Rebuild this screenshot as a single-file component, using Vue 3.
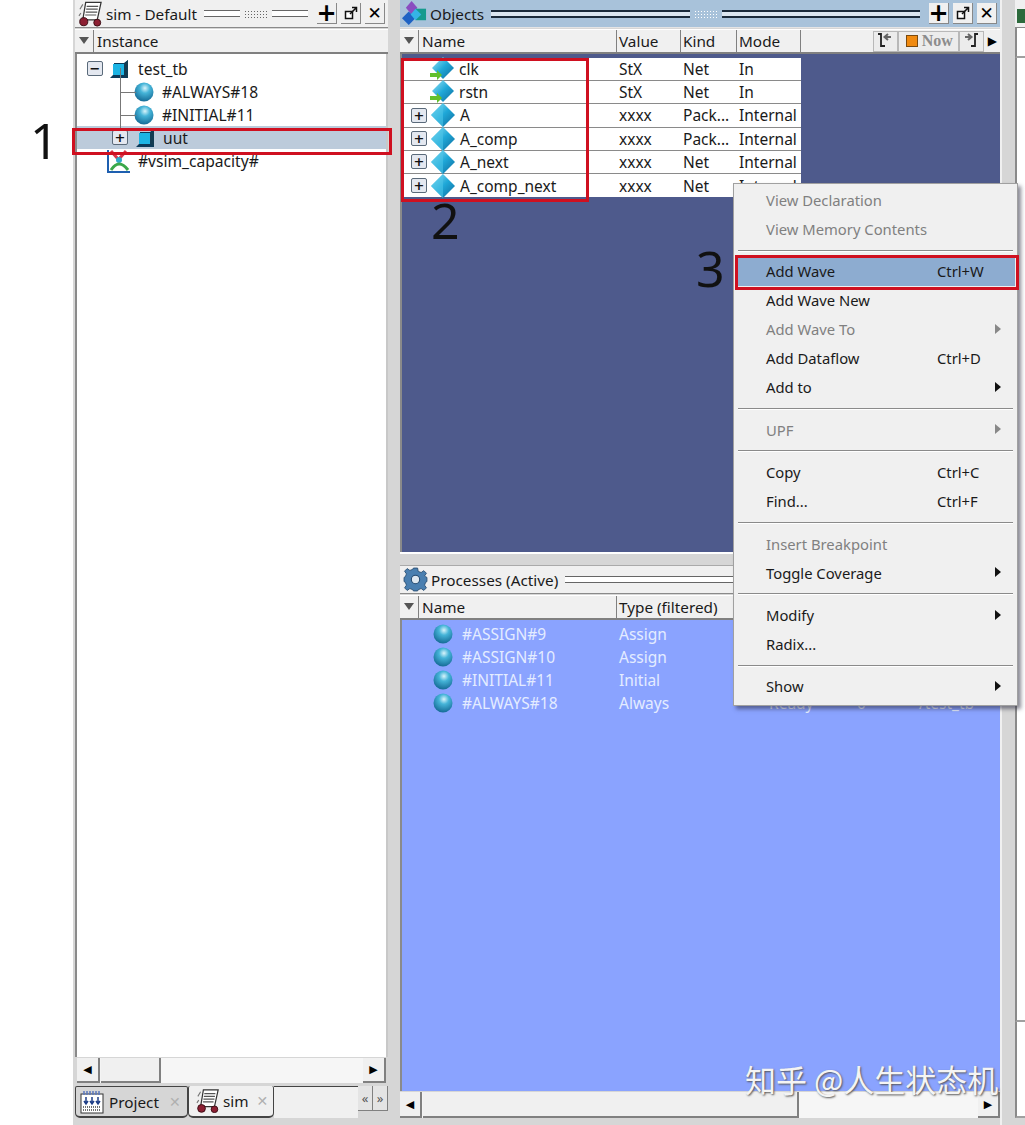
<script setup>
const tree = [
  { name: 'test_tb', icon: 'block', toggle: '−', level: 0 },
  { name: '#ALWAYS#18', icon: 'ball', level: 1, branch: true },
  { name: '#INITIAL#11', icon: 'ball', level: 1, branch: true },
  { name: 'uut', icon: 'block', toggle: '+', level: 1, selected: true, branch: true },
  { name: '#vsim_capacity#', icon: 'capacity', level: 2 }
]

const objects = [
  { name: 'clk', value: 'StX', kind: 'Net', mode: 'In', port: true },
  { name: 'rstn', value: 'StX', kind: 'Net', mode: 'In', port: true },
  { name: 'A', value: 'xxxx', kind: 'Pack...', mode: 'Internal' },
  { name: 'A_comp', value: 'xxxx', kind: 'Pack...', mode: 'Internal' },
  { name: 'A_next', value: 'xxxx', kind: 'Net', mode: 'Internal' },
  { name: 'A_comp_next', value: 'xxxx', kind: 'Net', mode: 'Internal' }
]

const processes = [
  { name: '#ASSIGN#9', type: 'Assign', state: 'Ready', order: '0', parent: '/test_tb' },
  { name: '#ASSIGN#10', type: 'Assign', state: 'Ready', order: '0', parent: '/test_tb' },
  { name: '#INITIAL#11', type: 'Initial', state: 'Ready', order: '0', parent: '/test_tb' },
  { name: '#ALWAYS#18', type: 'Always', state: 'Ready', order: '0', parent: '/test_tb' }
]

const menu = [
  { label: 'View Declaration', off: true },
  { label: 'View Memory Contents', off: true },
  { sep: true },
  { label: 'Add Wave', key: 'Ctrl+W', active: true },
  { label: 'Add Wave New' },
  { label: 'Add Wave To', off: true, sub: true },
  { label: 'Add Dataflow', key: 'Ctrl+D' },
  { label: 'Add to', sub: true },
  { sep: true },
  { label: 'UPF', off: true, sub: true },
  { sep: true },
  { label: 'Copy', key: 'Ctrl+C' },
  { label: 'Find...', key: 'Ctrl+F' },
  { sep: true },
  { label: 'Insert Breakpoint', off: true },
  { label: 'Toggle Coverage', sub: true },
  { sep: true },
  { label: 'Modify', sub: true },
  { label: 'Radix...' },
  { sep: true },
  { label: 'Show', sub: true }
]
</script>

<template>
  <div class="desk">
    <svg class="defs" width="0" height="0">
      <defs>
        <radialGradient id="ballFill" cx="0.55" cy="0.3" r="0.75">
          <stop offset="0" stop-color="#d8f4fb" />
          <stop offset="0.35" stop-color="#45b4d8" />
          <stop offset="1" stop-color="#10638f" />
        </radialGradient>
        <linearGradient id="diaFill" x1="0" y1="0" x2="1" y2="1">
          <stop offset="0" stop-color="#9fe6f5" />
          <stop offset="0.5" stop-color="#1fa8d8" />
          <stop offset="1" stop-color="#0f6a9c" />
        </linearGradient>
        <symbol id="i-ball" viewBox="0 0 20 20">
          <circle cx="10" cy="10" r="9.5" fill="url(#ballFill)" />
        </symbol>
        <symbol id="i-block" viewBox="0 0 20 20">
          <path d="M1 19 L5 15 L5 4 L15 4 L19 1 L19 19 Z" fill="#0b3a5a" />
          <rect x="4" y="5" width="11" height="11" fill="#1cb4e4" />
          <path d="M15 5 L19 1 L19 19 L15 16 Z" fill="#133c52" />
        </symbol>
        <symbol id="i-dia" viewBox="0 0 24 24">
          <path d="M12 0 L24 12 L12 24 L0 12 Z" fill="url(#diaFill)" />
          <path d="M12 0 L12 24 L0 12 Z" fill="#4cc4e8" opacity="0.6" />
        </symbol>
        <symbol id="i-port" viewBox="0 0 24 24">
          <path d="M13 0 L24 11 L13 22 L2 11 Z" fill="url(#diaFill)" />
          <path d="M0 16 L7 16 L7 13 L12 18 L7 23 L7 20 L0 20 Z" fill="#62c02c" />
        </symbol>
        <symbol id="i-capacity" viewBox="0 0 24 24">
          <path d="M1 1 L1 23 L23 23" fill="none" stroke="#1e5fb0" stroke-width="2" />
          <path d="M4 2 L11 10 M19 2 L12 10" stroke="#d8364a" stroke-width="3" />
          <circle cx="12" cy="11" r="3" fill="#2fa8c8" />
          <path d="M4 21 Q12 9 21 21" fill="none" stroke="#3aa84a" stroke-width="3" />
        </symbol>
        <symbol id="i-sim" viewBox="0 0 26 26">
          <path d="M8 1 L24 1 L20 19 L5 19 Z" fill="#fff" stroke="#333" stroke-width="1.3" />
          <path d="M9 5 H21 M8.500 8 H20.500 M8 11 H20 M7.500 14 H19" stroke="#555" stroke-width="1.2" />
          <path d="M5 3 L2 8 M3 12 L1 15" stroke="#777" stroke-width="1.2" />
          <circle cx="6" cy="21" r="4.200" fill="#8c1f32" stroke="#3a0c14" />
          <circle cx="20" cy="22" r="3.600" fill="#8c1f32" stroke="#3a0c14" />
        </symbol>
        <symbol id="i-objects" viewBox="0 0 26 26">
          <path d="M10 0 L16 7 L10 14 L4 7 Z" fill="#8a4cc0" />
          <path d="M7 11 L14 18 L7 25 L0 18 Z" fill="#1d62c4" />
          <rect x="14" y="8" width="11" height="12" fill="#159a8e" />
          <path d="M14 8 L20 14 L14 20 L9 14 Z" fill="#35b4e6" />
        </symbol>
        <symbol id="i-gear" viewBox="0 0 24 24">
          <path d="M10 1 H14 L14.600 4.200 L17.400 5.300 L20 3.500 L22.500 6 L20.700 8.600 L21.800 9.400 L23 10 V14 L21.800 14.600 L20.700 17.400 L22.500 20 L20 22.500 L17.400 20.700 L14.600 21.800 L14 23 H10 L9.400 21.800 L6.600 20.700 L4 22.500 L1.500 20 L3.300 17.400 L2.200 14.600 L1 14 V10 L2.200 9.400 L3.300 6.600 L1.500 4 L4 1.500 L6.600 3.300 L9.400 2.200 Z" fill="#4a7fb0" stroke="#24496e" stroke-width="0.8" />
          <circle cx="12" cy="12" r="4" fill="#dfe8f0" stroke="#24496e" />
        </symbol>
        <symbol id="i-project" viewBox="0 0 24 24">
          <rect x="1" y="4" width="22" height="19" fill="#fff" stroke="#333" />
          <path d="M3 2 H21 M3 4 H21" stroke="#5a78c0" stroke-width="1.500" stroke-dasharray="2 1" />
          <path d="M6 7 V13 M4 11 L6 14 L8 11 M12 7 V13 M10 11 L12 14 L14 11 M18 7 V13 M16 11 L18 14 L20 11" stroke="#1f3f88" stroke-width="1.500" fill="none" />
          <path d="M3 17 H21 M3 20 H21" stroke="#444" stroke-width="1.500" stroke-dasharray="1 1" />
        </symbol>
        <symbol id="i-float" viewBox="0 0 14 14">
          <rect x="1.500" y="5.500" width="7" height="7" fill="#fff" stroke="#111" stroke-width="1.500" />
          <path d="M6 8 L12 2 M8 1.500 H12.500 V6" fill="none" stroke="#111" stroke-width="1.500" />
        </symbol>
      </defs>
    </svg>

    <!-- left pane -->
    <section class="left">
      <header class="title">
        <svg class="ico sim"><use href="#i-sim" /></svg>
        <span class="title-text">sim - Default</span>
        <span class="grip"><i></i><b></b><i></i></span>
        <span class="tool plus">+</span>
        <span class="tool"><svg class="float"><use href="#i-float" /></svg></span>
        <span class="tool close">✕</span>
      </header>
      <div class="cols">
        <span class="sort"></span>
        <span class="col">Instance</span>
      </div>
      <div class="tree">
        <div v-for="node in tree" :key="node.name" class="tree-row" :class="['lv' + node.level, { selected: node.selected, branch: node.branch }]">
          <span v-if="node.toggle" class="toggle">{{ node.toggle }}</span>
          <svg class="ico" :class="node.icon"><use :href="'#i-' + node.icon" /></svg>
          <span class="tree-name">{{ node.name }}</span>
        </div>
      </div>
      <div class="hbar left-bar">
        <span class="arrow">◀</span>
        <span class="thumb"></span>
        <span class="track"></span>
        <span class="arrow">▶</span>
      </div>
      <div class="tabs">
        <div class="tab back">
          <svg class="tab-ico"><use href="#i-project" /></svg>
          Project <span class="tab-x">✕</span>
        </div>
        <div class="tab front">
          <svg class="tab-ico"><use href="#i-sim" /></svg>
          sim <span class="tab-x">✕</span>
        </div>
        <div class="tab-fill"></div>
        <span class="tab-nav">«</span>
        <span class="tab-nav">»</span>
      </div>
    </section>

    <!-- middle panes -->
    <section class="middle">
      <div class="pane objects">
        <header class="title blue">
          <svg class="ico obj"><use href="#i-objects" /></svg>
          <span class="title-text">Objects</span>
          <span class="grip dark"><i></i><b></b><i></i></span>
          <span class="tool plus">+</span>
          <span class="tool"><svg class="float"><use href="#i-float" /></svg></span>
          <span class="tool close">✕</span>
        </header>
        <div class="cols">
          <span class="sort"></span>
          <span class="col c-head-name">Name</span>
          <span class="col c-value">Value</span>
          <span class="col c-kind">Kind</span>
          <span class="col c-mode">Mode</span>
          <span class="now-box">
            <span class="now-btn">
              <svg width="18" height="18" viewBox="0 0 18 18"><path d="M2 2 H5 V14 H9" fill="none" stroke="#222" stroke-width="1.800" /><path d="M15 5 H10 M12 2 L8.500 5 L12 8" fill="none" stroke="#666" stroke-width="2" /></svg>
            </span>
            <span class="now-btn now"><i></i>Now</span>
            <span class="now-btn">
              <svg width="18" height="18" viewBox="0 0 18 18"><path d="M16 2 H13 V14 H9" fill="none" stroke="#222" stroke-width="1.800" /><path d="M3 5 H8 M6 2 L9.500 5 L6 8" fill="none" stroke="#666" stroke-width="2" /></svg>
            </span>
            <span class="now-more">▶</span>
          </span>
        </div>
        <div class="obj-body">
          <div v-for="row in objects" :key="row.name" class="obj-row">
            <span class="c-name obj-name">
              <span v-if="!row.port" class="toggle">+</span>
              <svg class="ico dia" :class="{ port: row.port }"><use :href="row.port ? '#i-port' : '#i-dia'" /></svg>
              <span>{{ row.name }}</span>
            </span>
            <span class="c-value">{{ row.value }}</span>
            <span class="c-kind">{{ row.kind }}</span>
            <span class="c-mode">{{ row.mode }}</span>
          </div>
        </div>
      </div>

      <div class="pane processes">
        <header class="title">
          <svg class="ico obj"><use href="#i-gear" /></svg>
          <span class="title-text">Processes (Active)</span>
          <span class="grip"><i></i></span>
        </header>
        <div class="cols">
          <span class="sort"></span>
          <span class="col c-head-name">Name</span>
          <span class="col c-type">Type (filtered)</span>
        </div>
        <div class="proc-body">
          <div v-for="row in processes" :key="row.name" class="proc-row">
            <span class="c-name proc-name">
              <svg class="ico ball"><use href="#i-ball" /></svg>
              <span>{{ row.name }}</span>
            </span>
            <span class="c-type">{{ row.type }}</span>
            <span class="c-state">{{ row.state }}</span>
            <span class="c-order">{{ row.order }}</span>
            <span>{{ row.parent }}</span>
          </div>
        </div>
        <div class="hbar proc-bar">
          <span class="arrow">◀</span>
          <span class="thumb"></span>
          <span class="track"></span>
          <span class="arrow">▶</span>
        </div>
      </div>
    </section>

    <!-- cut off pane at the right edge -->
    <section class="far">
      <div class="far-top"><span class="far-ico"></span></div>
      <div class="far-head"></div>
      <div class="far-body"></div>
      <div class="far-foot"></div>
    </section>

    <!-- context menu -->
    <div class="menu">
      <template v-for="(item, i) in menu" :key="i">
        <div v-if="item.sep" class="menu-sep"></div>
        <div v-else class="menu-item" :class="{ off: item.off, active: item.active }">
          <span class="menu-label">{{ item.label }}</span>
          <span v-if="item.key" class="menu-key">{{ item.key }}</span>
          <span v-if="item.sub" class="menu-sub"></span>
        </div>
      </template>
    </div>

    <!-- annotations drawn on top of the capture -->
    <div class="mark m1"></div>
    <div class="mark m2"></div>
    <div class="mark m3"></div>
    <span class="num n1">1</span>
    <span class="num n2">2</span>
    <span class="num n3">3</span>
    <span class="watermark">知乎 @人生状态机</span>
  </div>
</template>

<style>
html, body { margin: 0; background: #fff; }
</style>

<style scoped>
.desk {
  position: relative;
  display: flex;
  width: 1025px;
  height: 1125px;
  overflow: hidden;
  box-sizing: border-box;
  padding-left: 73px;
  background: linear-gradient(to right, #fff 73px, #d6d6d6 73px);
  font-family: "Noto Sans", "Open Sans", sans-serif;
  font-size: 15.3px;
  color: #1a1a1a;
}
.defs { position: absolute; }

.left {
  width: 313px;
  margin-left: 2px;
  margin-right: 12px;
  flex: none;
  display: flex;
  flex-direction: column;
  height: 1118px;
}
.title {
  display: flex;
  align-items: center;
  height: 28px;
  flex: none;
  padding: 0 3px 0 3px;
  background: #f0f0f0;
  box-sizing: border-box;
  border-bottom: 1px solid #8a8a8a;
}
.title.blue { background: #a8c2da; border-bottom: 1px solid #e4e4e4; padding-left: 2px; }
.title-text { margin-left: 3px; white-space: nowrap; }
.ico { flex: none; width: 20px; height: 20px; }
.ico.sim { width: 25px; height: 26px; }
.ico.obj { width: 25px; height: 25px; }
.grip {
  flex: 1;
  display: flex;
  align-items: center;
  gap: 4px;
  margin: 0 5px 0 7px;
  min-width: 0;
}
.grip i {
  flex: 1;
  height: 5px;
  border-top: 1px solid #666;
  border-bottom: 1px solid #666;
  background: #fff;
}
.grip b {
  width: 24px;
  height: 8px;
  background-image: radial-gradient(#666 0.8px, transparent 1px);
  background-size: 3px 3px;
}
.grip.dark i { height: 4px; border-top: 2px solid #1a2a3a; border-bottom: 2px solid #1a2a3a; background: #dbe6f0; }
.grip.dark b { background-image: radial-gradient(#fff 0.8px, transparent 1px); }
.tool {
  flex: none;
  width: 19px;
  height: 20px;
  margin-left: 4px;
  display: flex;
  align-items: center;
  justify-content: center;
  background: #f0f0f0;
  border-right: 1px solid #888;
  border-bottom: 1px solid #888;
  font-weight: 700;
  color: #000;
  font-family: "DejaVu Sans", sans-serif;
  font-size: 17px;
}
.tool.plus { font-size: 24px; line-height: 1; }
.float { width: 14px; height: 14px; }

.cols {
  position: relative;
  display: flex;
  height: 25px;
  flex: none;
  align-items: stretch;
  background: #f0f0f0;
  border-top: 1px solid #fff;
  border-bottom: 2px solid #808080;
  box-sizing: border-box;
  margin-top: 1px;
}
.sort {
  width: 18px;
  flex: none;
  border-right: 1px solid #808080;
  position: relative;
}
.sort::after {
  content: "";
  position: absolute;
  left: 4px;
  top: 7px;
  border-left: 5px solid transparent;
  border-right: 5px solid transparent;
  border-top: 7px solid #555;
}
.col { padding-left: 2px; line-height: 22px; box-sizing: border-box; border-right: 1px solid #808080; }
.left .col { border-right: 0; padding-left: 3px; }

.tree { flex: 1; background: #fff; padding-top: 3px; border-left: 2px solid #8a8a8a; border-right: 2px solid #c8c8c8; }
.tree-row {
  position: relative;
  height: 23px;
  display: flex;
  align-items: center;
  box-sizing: border-box;
  font-size: 15.6px;
}
.tree-row.selected { background: #bccbdb; }
.tree-row.branch::before {
  content: "";
  position: absolute;
  left: 43px;
  top: -12px;
  height: 24px;
  width: 15px;
  border-left: 1px solid #777;
  border-bottom: 1px solid #777;
}
.tree-row.selected::before { border-bottom: 0; height: 14px; }
.lv0 { padding-left: 10px; }
.lv0 .toggle { margin-right: 6px; }
.lv0 .ico { margin-right: 9px; }
.lv1 { padding-left: 57px; }
.lv1 .ico { margin-right: 8px; }
.lv2 { padding-left: 30px; }
.lv2 .ico { width: 24px; height: 24px; margin-right: 7px; }
.lv1.selected { padding-left: 35px; }
.selected .toggle { margin-right: 7px; position: relative; z-index: 1; }
.selected .ico { margin-right: 8px; }

.toggle {
  flex: none;
  width: 14px;
  height: 13px;
  display: flex;
  align-items: center;
  justify-content: center;
  background: #e4e8f0;
  border: 1px solid #5a6a7a;
  border-radius: 2px;
  font-size: 13px;
  font-weight: 700;
  line-height: 1;
  font-family: "DejaVu Sans", sans-serif;
  color: #111;
}

.hbar { display: flex; align-items: stretch; flex: none; height: 25px; background: #f4f4f4; }
.left-bar { margin: 1px 2px 0 2px; }
.arrow {
  width: 23px;
  flex: none;
  display: flex;
  align-items: center;
  justify-content: center;
  background: #f0f0f0;
  border-right: 2px solid #808080;
  border-bottom: 2px solid #808080;
  font-size: 11px;
  color: #000;
  font-family: "DejaVu Sans", sans-serif;
  box-sizing: border-box;
}
.thumb {
  width: 60px;
  flex: none;
  margin-left: 1px;
  background: #f0f0f0;
  border-right: 2px solid #808080;
  border-bottom: 2px solid #808080;
  box-sizing: border-box;
}
.track { flex: 1; background: #f6f6f6; }

.tabs { display: flex; height: 32px; margin-top: 3px; align-items: stretch; }
.tab {
  display: flex;
  align-items: center;
  box-sizing: border-box;
  border: 1px solid #444;
  border-radius: 2px 2px 5px 5px;
  border-bottom-width: 2px;
}
.tab.back { width: 113px; padding-left: 4px; gap: 5px; background: #d6d6d6; }
.tab.front { width: 86px; padding-left: 7px; gap: 3px; background: #f0f0f0; border-top: 0; }
.tab-ico { width: 24px; height: 24px; flex: none; }
.tab-x { color: #b0b0b0; font-family: "DejaVu Sans", sans-serif; font-size: 14px; font-weight: 700; margin-left: 5px; }
.tab-fill { width: 84px; flex: none; background: #f0f0f0; border-top: 1px solid #444; box-sizing: border-box; }
.tab-nav {
  flex: 1;
  height: 24px;
  display: flex;
  align-items: center;
  justify-content: center;
  border-right: 1px solid #808080;
  border-bottom: 1px solid #808080;
  font-size: 13px;
  color: #555;
  background: #e4e4e4;
}

.middle {
  width: 602px;
  flex: none;
  box-sizing: border-box;
  border-right: 2px solid #f0f0f0;
  display: flex;
  flex-direction: column;
}
.pane { display: flex; flex-direction: column; box-sizing: border-box; }
.objects { height: 554px; border-bottom: 2px solid #fff; }
.processes { flex: 1; margin-top: 11px; margin-bottom: 7px; border-top: 1px solid #aaa; }
.c-head-name { width: 198px; flex: none; padding-left: 3px; }
.c-name { width: 215px; flex: none; box-sizing: border-box; }
.c-value { width: 64px; flex: none; box-sizing: border-box; }
.c-kind { width: 56px; flex: none; box-sizing: border-box; }
.c-mode { width: 64px; flex: none; box-sizing: border-box; }
.c-type { width: 152px; flex: none; box-sizing: border-box; }
.c-state { width: 88px; flex: none; }
.c-order { width: 62px; flex: none; }

.now-box {
  margin-left: auto;
  margin-right: 3px;
  display: flex;
  align-items: center;
}
.now-btn {
  height: 21px;
  width: 25px;
  display: flex;
  align-items: center;
  justify-content: center;
  background: #ececec;
  border: 1px solid #b8b8b8;
  box-sizing: border-box;
  color: #8c8c8c;
  font-family: "Liberation Serif", serif;
  font-weight: 700;
  font-size: 16px;
}
.now { width: 61px; gap: 4px; justify-content: flex-start; padding-left: 7px; }
.now i { width: 10px; height: 10px; flex: none; background: #f08a10; border: 1px solid #7a4a10; box-sizing: content-box; }
.now-more { font-size: 12px; margin-left: 4px; color: #000; font-family: "DejaVu Sans", sans-serif; }

.obj-body {
  flex: 1;
  background: #4e5a8c;
  padding-top: 4px;
  border-left: 2px solid #8a8a8a;
}
.obj-row {
  display: flex;
  width: 399px;
  height: 23.2px;
  align-items: center;
  background: #fff;
  border-bottom: 1px solid #8a8a8a;
  box-sizing: border-box;
  font-size: 15.5px;
}
.obj-row:last-child { border-bottom: 0; }
.obj-row .c-value, .obj-row .c-kind, .obj-row .c-mode { padding-left: 2px; }
.obj-name { display: flex; align-items: center; padding-left: 9px; height: 100%; }
.obj-name .toggle { margin-right: 4px; }
.ico.dia { width: 24px; height: 24px; margin-right: 5px; }
.ico.dia.port { margin-left: 19px; }

.proc-body {
  flex: 1;
  background: #8aa3ff;
  padding-top: 4px;
  border-left: 2px solid #8a8a8a;
  color: #e4ecff;
  font-size: 15.5px;
}
.proc-row {
  display: flex;
  height: 23px;
  align-items: center;
  position: relative;
  top: -2px;
}
.proc-row .c-type { padding-left: 2px; }
.proc-name { display: flex; align-items: center; padding-left: 31px; gap: 9px; }
.proc-bar { height: 26px; margin-top: 1px; }
.proc-bar .thumb { width: 376px; }
.proc-bar .arrow { width: 22px; }

.far { flex: 1; margin-left: 13px; display: flex; flex-direction: column; height: 1118px; }
.far-top { height: 28px; background: #f0f0f0; box-sizing: border-box; border-bottom: 1px solid #8a8a8a; padding: 9px 0 0 2px; }
.far-ico { display: block; width: 8px; height: 14px; background: #2c6a3c; }
.far-head { height: 28px; background: #fff; border-left: 2px solid #8a8a8a; border-bottom: 2px solid #a0a0a0; }
.far-body { flex: 1; background: #fff; border-left: 2px solid #8a8a8a; border-bottom: 2px solid #a0a0a0; }
.far-foot { height: 94px; background: #fff; border-left: 2px solid #8a8a8a; border-bottom: 2px solid #a0a0a0; }

.menu {
  position: absolute;
  left: 733px;
  top: 183px;
  width: 285px;
  height: 523px;
  box-sizing: border-box;
  padding: 1.6px 2px;
  background: #f0f0f0;
  border: 1px solid #a0a0a0;
  box-shadow: 3px 3px 4px rgba(40, 40, 60, 0.55);
  font-size: 14.8px;
  z-index: 2;
}
.menu-item {
  display: flex;
  align-items: center;
  height: 29px;
  padding-left: 30px;
  position: relative;
}
.menu-item.off { color: #808080; }
.menu-item.active { background: #8dacd0; }
.menu-label { width: 171px; flex: none; }
.menu-sub {
  position: absolute;
  right: 14px;
  top: 9px;
  border-top: 5px solid transparent;
  border-bottom: 5px solid transparent;
  border-left: 6px solid #111;
}
.off .menu-sub { border-left-color: #888; }
.menu-sep { height: 13.4px; box-sizing: border-box; margin: 0 2px; position: relative; }
.menu-sep::after {
  content: "";
  position: absolute;
  left: 0;
  right: 0;
  top: 6px;
  border-top: 1px solid #8a8a8a;
  border-bottom: 1px solid #fff;
}

.mark { position: absolute; border: 3px solid #cf1020; box-sizing: border-box; z-index: 3; }
.m1 { left: 72px; top: 128px; width: 320px; height: 27px; }
.m2 { left: 401px; top: 58px; width: 188px; height: 144px; }
.m3 { left: 735px; top: 255px; width: 284px; height: 35px; }
.num {
  position: absolute;
  z-index: 3;
  font-size: 50px;
  line-height: 1;
  color: #111;
  font-family: "Noto Sans", sans-serif;
}
.n1 { left: 30px; top: 115px; }
.n2 { left: 431px; top: 195px; }
.n3 { left: 696px; top: 243px; }
.watermark {
  position: absolute;
  z-index: 3;
  left: 745px;
  top: 1059px;
  font-size: 31px;
  line-height: 40px;
  white-space: nowrap;
  color: #f4f4f4;
  font-family: "Noto Sans CJK SC", sans-serif;
  text-shadow: 1px 1px 2px #555;
}
</style>
